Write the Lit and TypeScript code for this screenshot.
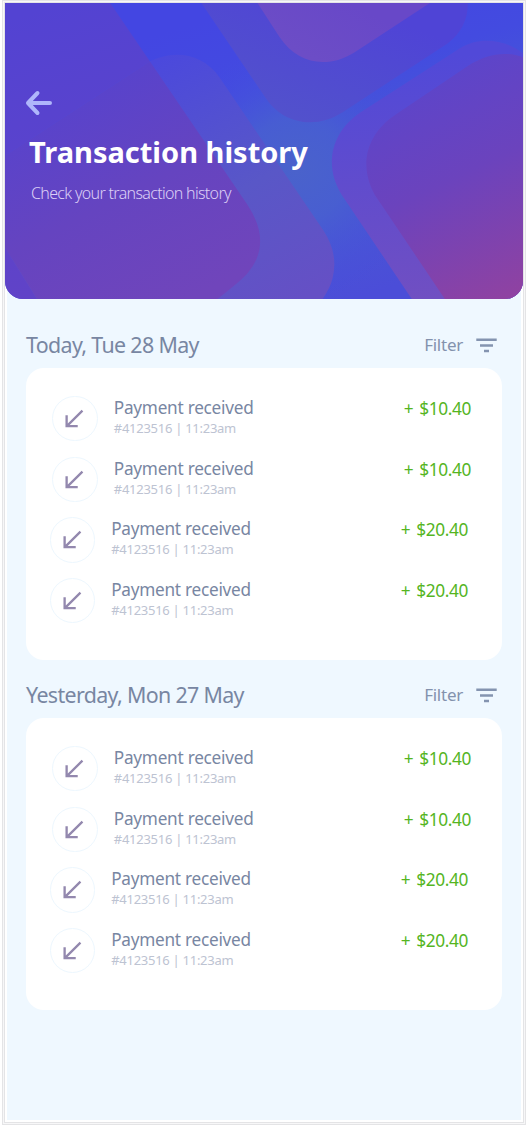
import { LitElement, html, css } from "lit";
import { customElement, property } from "lit/decorators.js";

interface Transaction {
  title: string;
  ref: string;
  amount: string;
  shifted?: boolean;
}

const transactions: Transaction[] = [
  { title: "Payment received", ref: "#4123516 | 11:23am", amount: "$10.40" },
  { title: "Payment received", ref: "#4123516 | 11:23am", amount: "$10.40" },
  { title: "Payment received", ref: "#4123516 | 11:23am", amount: "$20.40", shifted: true },
  { title: "Payment received", ref: "#4123516 | 11:23am", amount: "$20.40", shifted: true },
];

@customElement("transaction-row")
class TransactionRow extends LitElement {
  @property({ attribute: false }) item!: Transaction;

  static styles = css`
    :host { display: block; height: 60.7px; }
    .row { display: flex; align-items: flex-start; padding: 0 31px 0 26.3px; }
    .row.shifted { padding: 0 34px 0 23.7px; }
    .badge { flex: none; box-sizing: border-box; width: 45.4px; height: 45.4px; border: 1.4px solid #edf7fe; border-radius: 50%; }
    .badge svg { display: block; width: 100%; height: 100%; }
    .text { margin-left: 16.1px; flex: 1; white-space: nowrap; }
    .title { height: 24px; line-height: 24px; font-size: 17.2px; letter-spacing: -0.25px; color: #7886a2; }
    .ref { height: 16px; line-height: 16px; font-size: 13px; letter-spacing: -0.27px; color: #bdc3d2; }
    .amount { line-height: 24px; padding-top: 1px; font-size: 17.3px; letter-spacing: -0.4px; word-spacing: 2px; color: #55b51f; white-space: pre; }
  `;

  render() {
    const t = this.item;
    return html`<div class="row ${t.shifted ? "shifted" : ""}">
      <div class="badge">
        <svg viewBox="0 0 43 43" fill="none" stroke="#9388ae" stroke-width="2.3">
          <path d="M29.2 13.5L13.7 28.8M13.5 18V28.8H24.5" />
        </svg>
      </div>
      <div class="text">
        <div class="title">${t.title}</div>
        <div class="ref">${t.ref}</div>
      </div>
      <div class="amount">+ ${t.amount}</div>
    </div>`;
  }
}

@customElement("day-section")
class DaySection extends LitElement {
  @property() label = "";

  static styles = css`
    :host { display: block; height: 350px; }
    .head { display: flex; align-items: center; height: 46px; padding-right: 5px; color: #7886a2; }
    .day { flex: 1; font-size: 21.4px; letter-spacing: -0.65px; line-height: 28px; white-space: nowrap; }
    .filter { font-size: 17px; letter-spacing: -0.25px; line-height: 24px; margin-right: 13px; color: #8392ad; }
    .icon { display: block; width: 21px; height: 15px; }
    .card { box-sizing: border-box; height: 292px; padding-top: 27.5px; background: #fff; border-radius: 18px; }
  `;

  render() {
    return html`
      <div class="head">
        <div class="day">${this.label}</div>
        <div class="filter">Filter</div>
        <svg class="icon" viewBox="0 0 21 15" stroke="#8494b0" stroke-width="2.5">
          <path d="M0.3 1.7H20.7M4 7.5H17M8 13.1H13" />
        </svg>
      </div>
      <div class="card">
        ${transactions.map((t) => html`<transaction-row .item=${t}></transaction-row>`)}
      </div>`;
  }
}

@customElement("app-root")
class AppRoot extends LitElement {
  static styles = css`
    :host { display: block; background: #fff; font-family: "Noto Sans", "Open Sans", sans-serif; }
    .frame { box-sizing: border-box; margin: 0 1px 0 2px; height: 1125px; padding: 1px; background: #f7f7f8; border: 1px solid #e4e4e6; }
    .screen { display: flex; flex-direction: column; height: 1121px; box-sizing: border-box; background: #fff; overflow: hidden; border: 1px solid #e4e4e6; }
    .hero { position: relative; z-index: 1; display: grid; flex: none; height: 296px; border-radius: 0 0 18px 18px; overflow: hidden; }
    .body { flex: 1; margin: -20px 2px 2px; padding: 43.4px 19px 0; background: #eff8ff; }
    .art { grid-area: 1 / 1; display: block; width: 100%; height: 296px; }
    .intro { grid-area: 1 / 1; z-index: 1; padding: 87px 0 0 20px; }
    .back { display: block; width: 28px; height: 26px; }
    .heading { margin: 16px 0 0 4px; font-size: 29px; line-height: 40px; font-weight: 700; color: #fff; white-space: nowrap; }
    .sub { margin: 9px 0 0 6px; font-size: 16px; letter-spacing: -0.67px; line-height: 24px; font-weight: 300; color: #dccff6; white-space: nowrap; }
  `;

  render() {
    return html`<div class="frame"><div class="screen">
      <div class="hero">
        <svg class="art" viewBox="5 3 517 295" preserveAspectRatio="none">
          <defs>
            <linearGradient id="base" gradientUnits="userSpaceOnUse" x1="270" y1="3" x2="350" y2="298">
              <stop offset="0" stop-color="#4346e2" />
              <stop offset=".28" stop-color="#434be0" />
              <stop offset=".58" stop-color="#485bd2" />
              <stop offset="1" stop-color="#4b4dd8" />
            </linearGradient>
            <radialGradient id="glow" gradientUnits="userSpaceOnUse" cx="295" cy="170" r="130">
              <stop offset="0" stop-color="#4a62cb" />
              <stop offset=".4" stop-color="#4860d0" stop-opacity=".8" />
              <stop offset="1" stop-color="#444be0" stop-opacity="0" />
            </radialGradient>
            <linearGradient id="corner" gradientUnits="userSpaceOnUse" x1="415" y1="70" x2="522" y2="298">
              <stop offset="0" stop-color="#5b45cb" />
              <stop offset=".45" stop-color="#6b43bd" />
              <stop offset="1" stop-color="#9142a0" />
            </linearGradient>
            <linearGradient id="ring" gradientUnits="userSpaceOnUse" x1="400" y1="60" x2="420" y2="298">
              <stop offset="0" stop-color="#5149d8" />
              <stop offset="1" stop-color="#704fc2" />
            </linearGradient>
            <linearGradient id="left" gradientUnits="userSpaceOnUse" x1="60" y1="3" x2="150" y2="298">
              <stop offset="0" stop-color="#5343d2" />
              <stop offset="1" stop-color="#6243c6" />
            </linearGradient>
            <linearGradient id="mid" gradientUnits="userSpaceOnUse" x1="170" y1="54" x2="300" y2="298">
              <stop offset="0" stop-color="#4b49dc" />
              <stop offset=".55" stop-color="#5957c7" />
              <stop offset="1" stop-color="#6550c5" />
            </linearGradient>
            <linearGradient id="cross" gradientUnits="userSpaceOnUse" x1="80" y1="80" x2="190" y2="298">
              <stop offset="0" stop-color="#5743cd" />
              <stop offset=".5" stop-color="#6544c0" />
              <stop offset="1" stop-color="#7045bb" />
            </linearGradient>
            <linearGradient id="top" gradientUnits="userSpaceOnUse" x1="350" y1="3" x2="305" y2="122">
              <stop offset="0" stop-color="#4f44d6" />
              <stop offset="1" stop-color="#5251cc" />
            </linearGradient>
            <linearGradient id="peak" gradientUnits="userSpaceOnUse" x1="350" y1="3" x2="320" y2="62">
              <stop offset="0" stop-color="#6848c8" />
              <stop offset="1" stop-color="#6c4dc6" />
            </linearGradient>
            <clipPath id="leftClip">
              <path d="M5 3H110L247 204Q272 242 248 271Q244 277 217 298H5Z" />
            </clipPath>
          </defs>
          <rect x="5" y="3" width="517" height="295" fill="url(#base)" />
          <rect x="5" y="3" width="517" height="295" fill="url(#glow)" />
          <path fill="url(#left)" d="M5 3H110L247 204Q272 242 248 271Q244 277 217 298H5Z" />
          <path fill="url(#mid)" d="M5 155L142 66C166 49 200 50 219 77L323 230Q338 253 332 277Q330 286 322 298H37L5 247Z" />
          <path fill="url(#cross)" clip-path="url(#leftClip)" d="M5 155L142 66C166 49 200 50 219 77L323 230Q338 253 332 277Q330 286 322 298H37L5 247Z" />
          <path fill="url(#top)" d="M201 3L264 96C281 123 314 130 342 112L447 43Q467 28 467 3Z" />
          <path fill="url(#peak)" d="M257 3L279 37C297 64 327 69 354 52L429 3Z" />
          <path fill="url(#ring)" d="M522 53C504 39 478 36 459 48L360 112C330 132 323 165 341 194L411 298H522Z" />
          <path fill="url(#corner)" d="M522 57C503 50 484 55 468 65L395 114C365 134 358 165 374 194L444 298H522Z" />
        </svg>
        <div class="intro">
          <svg class="back" viewBox="0 0 28 26" fill="none" stroke="#afb6fb" stroke-width="4" stroke-linecap="round" stroke-linejoin="round">
            <path d="M12.5 3L3 13L12.5 23M3.5 13H25" />
          </svg>
          <h1 class="heading">Transaction history</h1>
          <div class="sub">Check your transaction history</div>
        </div>
      </div>
      <div class="body">
        <day-section label="Today, Tue 28 May"></day-section>
        <day-section label="Yesterday, Mon 27 May"></day-section>
      </div>
    </div></div>`;
  }
}
